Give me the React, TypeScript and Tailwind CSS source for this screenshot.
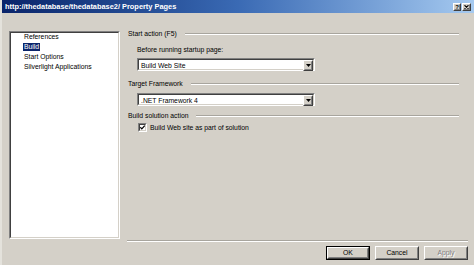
import React from "react";

const font = { fontFamily: '"Liberation Sans", Arial, sans-serif' };

function Sunken({ className = "", children }: { className?: string; children?: React.ReactNode }) {
  return (
    <div className={`border border-t-[#808080] border-l-[#808080] border-r-white border-b-white ${className}`}>
      <div className="flex h-full w-full border border-t-[#404040] border-l-[#404040] border-r-[#d4d0c8] border-b-[#d4d0c8] bg-white">
        {children}
      </div>
    </div>
  );
}

function Raised({ className = "", children }: { className?: string; children?: React.ReactNode }) {
  return (
    <div className={`border border-t-white border-l-white border-r-[#404040] border-b-[#404040] ${className}`}>
      <div className="flex h-full w-full items-center justify-center border border-t-[#d4d0c8] border-l-[#d4d0c8] border-r-[#808080] border-b-[#808080] bg-[#d4d0c8]">
        {children}
      </div>
    </div>
  );
}

function Combo({ value }: { value: string }) {
  return (
    <Sunken className="ml-[10px] h-[13px] w-[178px]">
      <span className="flex-1 pl-[2px] text-[6.8px] leading-[11px] text-black">{value}</span>
      <Raised className="h-[11px] w-[10px]">
        <svg width="5" height="3" viewBox="0 0 5 3">
          <path d="M0 0h5L2.5 3z" fill="#000" />
        </svg>
      </Raised>
    </Sunken>
  );
}

function GroupHeading({ label }: { label: string }) {
  return (
    <div className="flex h-[8px] items-center">
      <span className="pl-px text-[6.8px] leading-[8px]">{label}</span>
      <div className="ml-[8px] mr-[9px] flex-1 border-t border-b border-t-[#a8a59e] border-b-white" />
    </div>
  );
}

function DlgButton({ label, isDefault, disabled }: { label: string; isDefault?: boolean; disabled?: boolean }) {
  return (
    <div className={`h-[14px] w-[44px] ${isDefault ? "border border-black" : ""}`}>
      <Raised className="h-full w-full">
        <span
          className={`text-[6.8px] leading-none ${disabled ? "text-[#808080] [text-shadow:1px_1px_0_#fff]" : "text-black"}`}
        >
          {label}
        </span>
      </Raised>
    </div>
  );
}

export default function App() {
  const items = ["References", "Build", "Start Options", "Silverlight Applications"];
  return (
    <div style={font} className="flex h-[265px] w-[474px] flex-col overflow-hidden border-l-[2px] border-l-[#e4e2dc] bg-[#d4d0c8] text-black">
      <div className="flex h-[13px] items-center justify-between bg-linear-to-r from-[#0a246a] via-[#3a6ab4] to-[#a6caf0] pl-[3px] pr-[3px]">
        <span className="text-[7.4px] font-bold leading-none text-white">http://thedatabase/thedatabase2/ Property Pages</span>
        <div className="flex gap-px">
          <Raised className="h-[8px] w-[8px]">
            <span className="text-[6px] font-bold leading-none">?</span>
          </Raised>
          <Raised className="h-[8px] w-[9px]">
            <svg width="5" height="4" viewBox="0 0 5 4">
              <path d="M0.5 0.3L4.5 3.7M4.5 0.3L0.5 3.7" stroke="#000" strokeWidth="1.1" />
            </svg>
          </Raised>
        </div>
      </div>

      <div className="flex gap-[7px] pl-[7px] pr-[6px] pt-[18px]">
        <Sunken className="h-[208px] w-[111px] self-start">
          <div className="-mt-px flex flex-col pl-[12px]">
            {items.map((it) => (
              <div key={it} className="flex h-[10px] items-center">
                <span
                  className={`px-px text-[6.8px] leading-[8px] ${it === "Build" ? "bg-[#0a246a] text-white" : "text-black"}`}
                >
                  {it}
                </span>
              </div>
            ))}
          </div>
        </Sunken>

        <div className="-mt-px flex h-[212px] flex-1 flex-col">
          <GroupHeading label="Start action (F5)" />
          <div className="mt-[8px] h-[8px] pl-[10px] text-[6.8px] leading-[8px]">Before running startup page:</div>
          <div className="mt-[4px]">
            <Combo value="Build Web Site" />
          </div>

          <div className="mt-[9px]">
            <GroupHeading label="Target Framework" />
          </div>
          <div className="mt-[5px]">
            <Combo value=".NET Framework 4" />
          </div>

          <div className="mt-[6px]">
            <GroupHeading label="Build solution action" />
          </div>
          <div className="mt-[3px] flex h-[9px] items-center pl-[11px]">
            <Sunken className="h-[9px] w-[9px]">
              <svg width="5" height="5" viewBox="0 0 5 5">
                <path d="M0.3 2.2L1.8 3.8L4.7 0.6" stroke="#000" strokeWidth="1.2" fill="none" />
              </svg>
            </Sunken>
            <span className="ml-[3px] text-[6.8px] leading-[8px]">Build Web site as part of solution</span>
          </div>

          <div className="mt-auto border-t border-b border-t-[#a8a59e] border-b-white" />
        </div>
      </div>

      <div className="flex justify-end gap-[5px] pr-[6px] pt-[4px]">
        <DlgButton label="OK" isDefault />
        <DlgButton label="Cancel" />
        <DlgButton label="Apply" disabled />
      </div>
    </div>
  );
}
